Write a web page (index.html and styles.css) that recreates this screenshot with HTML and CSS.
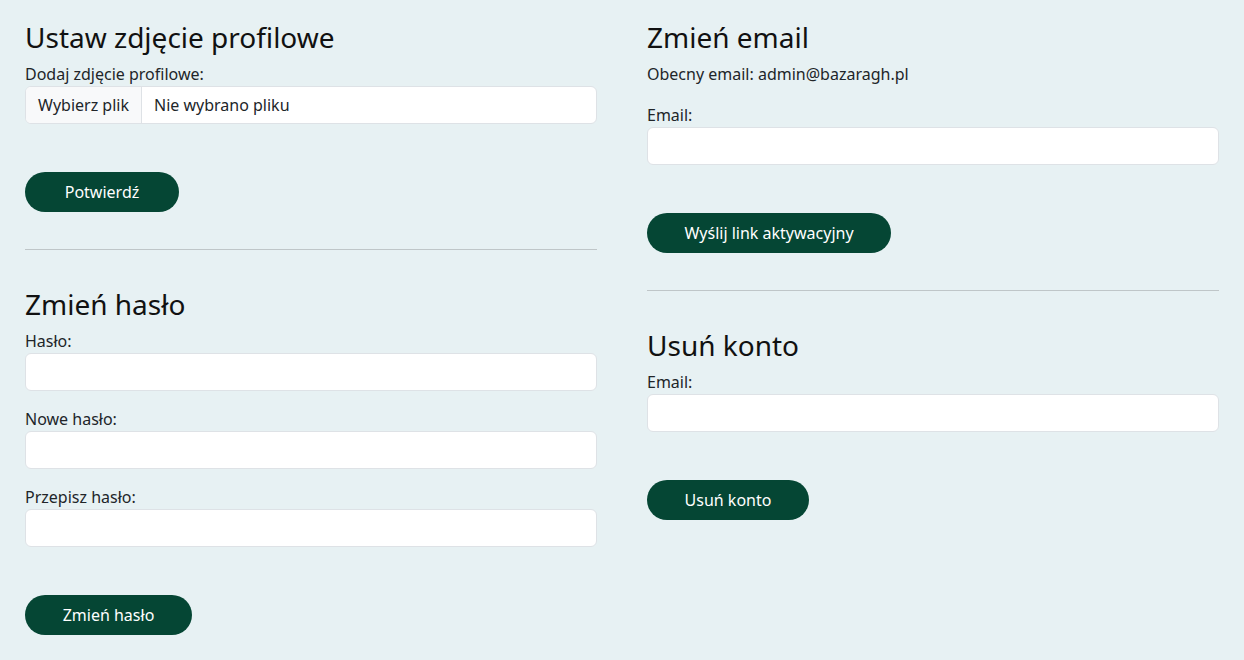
FILE: index.html
```html
<!DOCTYPE html>
<html lang="pl">
<head>
<meta charset="utf-8">
<title>Ustawienia konta</title>
<link rel="stylesheet" href="styles.css">
</head>
<body>
<main class="page">
  <section class="col">
    <form class="block">
      <h3 class="title">Ustaw zdjęcie profilowe</h3>
      <label class="label">Dodaj zdjęcie profilowe:</label>
      <div class="file">
        <span class="file-btn">Wybierz plik</span>
        <span class="file-name">Nie wybrano pliku</span>
      </div>
      <button type="button" class="btn btn-confirm">Potwierdź</button>
    </form>
    <hr class="sep">
    <form class="block">
      <h3 class="title">Zmień hasło</h3>
      <div class="group">
        <label class="label">Hasło:</label>
        <input class="input" type="password">
      </div>
      <div class="group">
        <label class="label">Nowe hasło:</label>
        <input class="input" type="password">
      </div>
      <div class="group last">
        <label class="label">Przepisz hasło:</label>
        <input class="input" type="password">
      </div>
      <button type="button" class="btn btn-pass">Zmień hasło</button>
    </form>
  </section>
  <section class="col">
    <form class="block">
      <h3 class="title">Zmień email</h3>
      <p class="current">Obecny email: admin@bazaragh.pl</p>
      <div class="group last">
        <label class="label">Email:</label>
        <input class="input" type="email">
      </div>
      <button type="button" class="btn btn-link">Wyślij link aktywacyjny</button>
    </form>
    <hr class="sep">
    <form class="block">
      <h3 class="title">Usuń konto</h3>
      <div class="group last">
        <label class="label">Email:</label>
        <input class="input" type="email">
      </div>
      <button type="button" class="btn btn-del">Usuń konto</button>
    </form>
  </section>
</main>
</body>
</html>
```
FILE: styles.css
```css
* { box-sizing: border-box; }
html, body { margin: 0; padding: 0; }
body {
  background: #e7f1f3;
  color: #212529;
  font-family: "Noto Sans", "DejaVu Sans", sans-serif;
  font-size: 16px;
  line-height: 1.5;
}
.page {
  display: grid;
  grid-template-columns: 1fr 1fr;
  column-gap: 50px;
  padding: 20px 25px 0;
}
.col { display: flex; flex-direction: column; }
.block { margin: 0; display: flex; flex-direction: column; align-items: flex-start; }
.title {
  margin: 0 0 8px;
  font-size: 28px;
  font-weight: 400;
  line-height: 34px;
  color: #111;
}
.label { display: block; width: 100%; }
.group { width: 100%; margin-bottom: 16px; }
.group.last { margin-bottom: 0; }
.current { margin: 0 0 17px; }
.input {
  display: block;
  width: 100%;
  height: 38px;
  border: 1px solid #dee2e6;
  border-radius: 6px;
  background: #fff;
  font: inherit;
  padding: 6px 12px;
}
.file {
  display: flex;
  width: 100%;
  height: 38px;
  border: 1px solid #dee2e6;
  border-radius: 6px;
  background: #fff;
  overflow: hidden;
  align-items: stretch;
}
.file-btn {
  background: #f8f9fa;
  border-right: 1px solid #dee2e6;
  padding: 0 12px;
  display: flex;
  align-items: center;
}
.file-name { padding: 0 12px; display: flex; align-items: center; }
.btn {
  margin-top: 48px;
  height: 40px;
  border: 0;
  border-radius: 20px;
  background: #054634;
  color: #fff;
  font: inherit;
  font-size: 16px;
  font-weight: 400;
  padding: 0;
  display: flex;
  align-items: center;
  justify-content: center;
}
.btn-confirm { width: 154px; }
.btn-pass { width: 167px; }
.btn-link { width: 244px; }
.btn-del { width: 162px; }
.sep {
  width: 100%;
  margin: 37px 0 37px;
  border: 0;
  border-top: 1px solid #bfc6c8;
}
```
